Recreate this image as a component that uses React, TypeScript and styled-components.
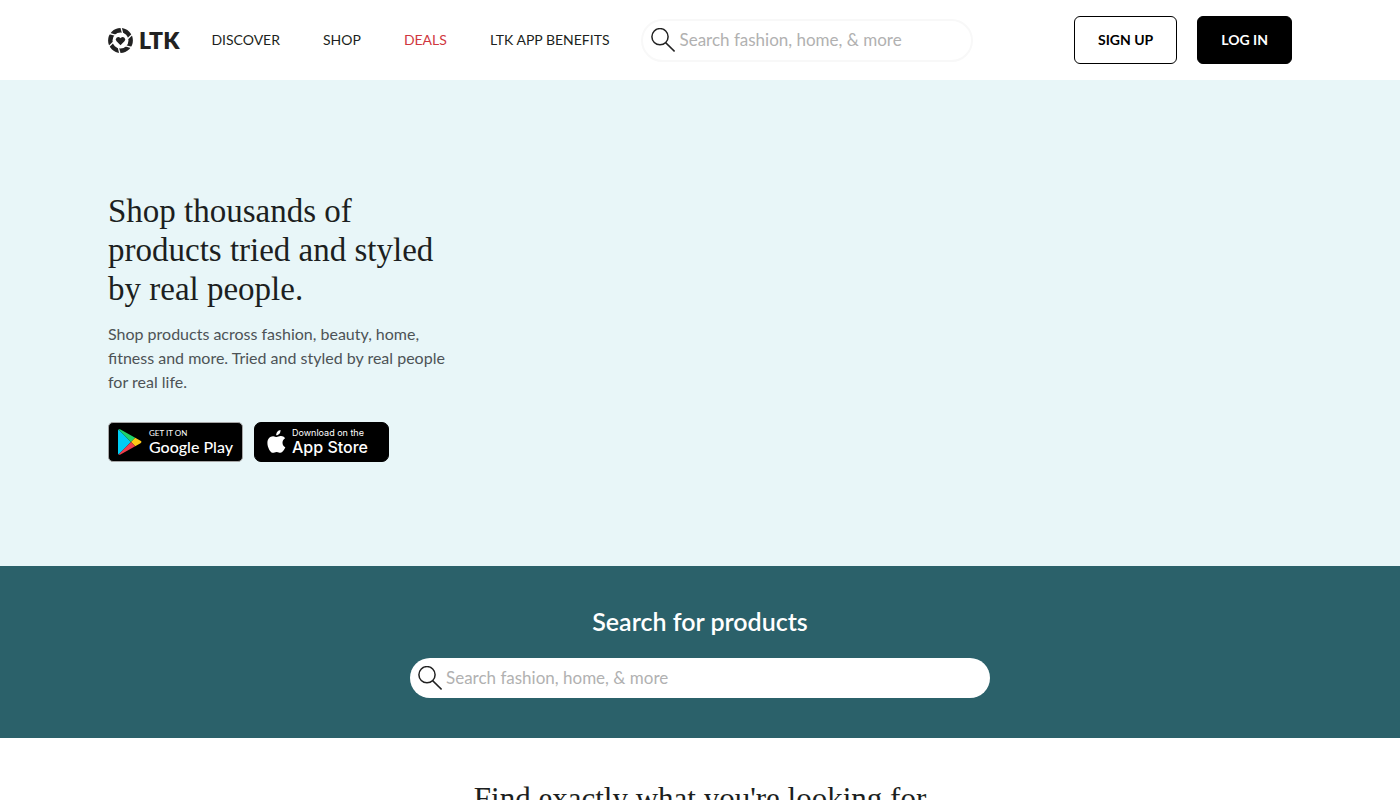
import React from "react";
import styled, { createGlobalStyle } from "styled-components";

const sans = `Lato, "Liberation Sans", sans-serif`;
const serif = `"Liberation Serif", serif`;

const GlobalStyle = createGlobalStyle`
  *, *::before, *::after { box-sizing: border-box; }
  body { margin: 0; background: #fff; color: #1c1f21; font-family: ${sans}; }
  h1, h2, p { margin: 0; }
  a { text-decoration: none; }
`;

const Container = styled.div`
  width: 100%;
  max-width: 1184px;
  margin: 0 auto;
`;

const Header = styled.header`
  background: #fff;
`;

const HeaderRow = styled(Container)`
  display: flex;
  align-items: center;
  min-height: 80px;
`;

const Logo = styled.a`
  display: flex;
  align-items: center;
  gap: 6px;
  color: #222;
  font-size: 23px;
  line-height: 26px;
  font-weight: 800;
`;

const Nav = styled.nav`
  display: flex;
  gap: 43px;
  margin-left: 32px;
`;

const NavLink = styled.a<{ $accent?: boolean }>`
  color: ${(p) => (p.$accent ? "#d0373e" : "#1c1f21")};
  font-size: 14px;
  line-height: 20px;
  white-space: nowrap;
`;

const SearchBox = styled.form<{ $outlined?: boolean }>`
  display: flex;
  align-items: center;
  gap: 4px;
  width: 100%;
  max-width: ${(p) => (p.$outlined ? "332px" : "580px")};
  height: ${(p) => (p.$outlined ? "43px" : "40px")};
  margin: ${(p) => (p.$outlined ? "0 20px 0 32px" : "0 auto")};
  padding: 0 8px;
  border: ${(p) => (p.$outlined ? "2px solid #f8f8f8" : "0")};
  border-radius: 22px;
  background: #fff;
`;

const SearchInput = styled.input`
  flex: 1;
  min-width: 0;
  padding: 0;
  border: 0;
  outline: 0;
  background: transparent;
  color: #1c1f21;
  font: 17px/24px ${sans};
  &::placeholder { color: #b1b1b1; opacity: 1; }
`;

const Actions = styled.div`
  display: flex;
  gap: 20px;
  margin-left: auto;
`;

const Button = styled.button<{ $filled?: boolean }>`
  height: 48px;
  padding: 0 23px;
  border: 1px solid #000;
  border-radius: 6px;
  background: ${(p) => (p.$filled ? "#000" : "#fff")};
  color: ${(p) => (p.$filled ? "#fff" : "#000")};
  font: 700 14px/20px ${sans};
  white-space: nowrap;
  cursor: pointer;
`;

const Hero = styled.section`
  padding: 112px 0 104px;
  background: #e8f6f8;
`;

const HeroTitle = styled.h1`
  max-width: 350px;
  font: 400 33px/39px ${serif};
`;

const HeroText = styled.p`
  max-width: 360px;
  margin: 13px 0 28px;
  color: #4d5356;
  font-size: 16px;
  line-height: 24px;
`;

const Badges = styled.div`
  display: flex;
  gap: 11px;
`;

const Badge = styled.a<{ $outlined?: boolean }>`
  display: flex;
  align-items: center;
  gap: ${(p) => (p.$outlined ? "7px" : "6px")};
  width: 135px;
  height: 40px;
  padding-left: ${(p) => (p.$outlined ? "9px" : "12px")};
  border: 1px solid ${(p) => (p.$outlined ? "#a6a6a6" : "#000")};
  border-radius: ${(p) => (p.$outlined ? "5px" : "7px")};
  background: #000;
  color: #fff;
  white-space: nowrap;
`;

const BadgeText = styled.span`
  display: flex;
  flex-direction: column;
`;

const BadgeSmall = styled.span<{ $face: string; $size: number }>`
  font: 400 ${(p) => p.$size}px/10px ${(p) => p.$face};
`;

const BadgeName = styled.span<{ $face: string }>`
  font: 500 16px/18px ${(p) => p.$face};
`;

const SearchBand = styled.section`
  padding: 40px 20px;
  background: #2b616a;
`;

const BandTitle = styled.h2`
  margin-bottom: 22px;
  color: #fff;
  font: 600 25px/30px ${sans};
  text-align: center;
`;

const Finder = styled.section`
  padding: 42px 20px;
`;

const FinderTitle = styled.h2`
  font: 400 31px/38px ${serif};
  text-align: center;
`;

const LogoMark = () => (
  <svg width="25" height="25" viewBox="0 0 26 26" aria-hidden="true">
    <circle cx="13" cy="13" r="10.6" fill="none" stroke="#222" strokeWidth="4.6" />
    <g stroke="#fff" strokeWidth="1.4">
      {[0, 60, 120, 180, 240, 300].map((angle) => (
        <path key={angle} d="M11.2 -0.5 L14.2 6" transform={`rotate(${angle + 10} 13 13)`} />
      ))}
    </g>
    <path
      d="M13 18 8.9 13.900a2.6 2.6 0 0 1 0-3.700 2.6 2.6 0 0 1 3.700 0l.4.4.4-.4a2.6 2.6 0 0 1 3.700 0 2.6 2.6 0 0 1 0 3.700Z"
      fill="#222"
    />
  </svg>
);

const SearchIcon = () => (
  <svg width="24" height="24" viewBox="0 0 24 24" fill="none" stroke="#222" strokeWidth="1.5" aria-hidden="true">
    <circle cx="9" cy="8.7" r="8.1" />
    <path d="M14.6 14.6 23.6 23.5" />
  </svg>
);

const PlayIcon = () => (
  <svg width="24" height="26" viewBox="0 0 24 26" aria-hidden="true">
    <path d="M.6.5 13 13 .6 25.5C.2 25.2 0 24.700 0 24V2C0 1.300.2.8.6.5Z" fill="#00cdf5" />
    <path d="M.6.5C1.100.1 1.800.1 2.500.5L17.200 8.800 13 13Z" fill="#1fd36b" />
    <path d="M17.200 8.800 22.500 11.800C23.800 12.500 23.800 13.500 22.500 14.200L17.200 17.200 13 13Z" fill="#ffc815" />
    <path d="M.6 25.500C1.100 25.900 1.800 25.900 2.500 25.500L17.200 17.200 13 13Z" fill="#ef3d4c" />
  </svg>
);

const AppleIcon = () => (
  <svg width="19" height="24" viewBox="0 0 19 24" fill="#fff" aria-hidden="true">
    <path d="M15.500 12.700c0-2.200 1.200-3.500 2.600-4.400-1-1.400-2.500-2.100-4.100-2.200-1.800-.2-3.300 1-4.300 1-.9 0-2.200-1-3.700-.9C3.100 6.300.4 8.600.4 12.900c0 4.500 3.100 9.900 5.500 9.900 1.400 0 2-.9 3.800-.9s2.300.9 3.700.9c2.100 0 4-3.200 4.900-5.500-1.700-.8-2.800-2.400-2.800-4.600Z" />
    <path d="M13.500 0c.2 2.800-1.700 5.400-4.300 5.300C9 2.700 11.100.2 13.500 0Z" />
  </svg>
);

const ProductSearch = ({ id, outlined }: { id: string; outlined?: boolean }) => (
  <SearchBox $outlined={outlined} role="search" onSubmit={(e) => e.preventDefault()}>
    <SearchIcon />
    <SearchInput id={id} type="text" aria-label="Search products" placeholder="Search fashion, home, & more" />
  </SearchBox>
);

const inter = `Inter, "Liberation Sans", sans-serif`;

export default function App() {
  return (
    <>
      <GlobalStyle />
      <Header>
        <HeaderRow>
          <Logo href="#">
            <LogoMark />
            LTK
          </Logo>
          <Nav>
            <NavLink href="#">DISCOVER</NavLink>
            <NavLink href="#">SHOP</NavLink>
            <NavLink href="#" $accent>DEALS</NavLink>
            <NavLink href="#">LTK APP BENEFITS</NavLink>
          </Nav>
          <ProductSearch id="header-search" outlined />
          <Actions>
            <Button type="button">SIGN UP</Button>
            <Button type="button" $filled>LOG IN</Button>
          </Actions>
        </HeaderRow>
      </Header>
      <main>
        <Hero>
          <Container>
            <HeroTitle>Shop thousands of products tried and styled by real people.</HeroTitle>
            <HeroText>
              Shop products across fashion, beauty, home, fitness and more. Tried and styled by real people for real
              life.
            </HeroText>
            <Badges>
              <Badge href="#" $outlined>
                <PlayIcon />
                <BadgeText>
                  <BadgeSmall $face={sans} $size={8}>GET IT ON</BadgeSmall>
                  <BadgeName $face={sans}>Google Play</BadgeName>
                </BadgeText>
              </Badge>
              <Badge href="#">
                <AppleIcon />
                <BadgeText>
                  <BadgeSmall $face={inter} $size={9}>Download on the</BadgeSmall>
                  <BadgeName $face={inter}>App Store</BadgeName>
                </BadgeText>
              </Badge>
            </Badges>
          </Container>
        </Hero>
        <SearchBand>
          <BandTitle>Search for products</BandTitle>
          <ProductSearch id="product-search" />
        </SearchBand>
        <Finder>
          <FinderTitle>Find exactly what you're looking for</FinderTitle>
        </Finder>
      </main>
    </>
  );
}
